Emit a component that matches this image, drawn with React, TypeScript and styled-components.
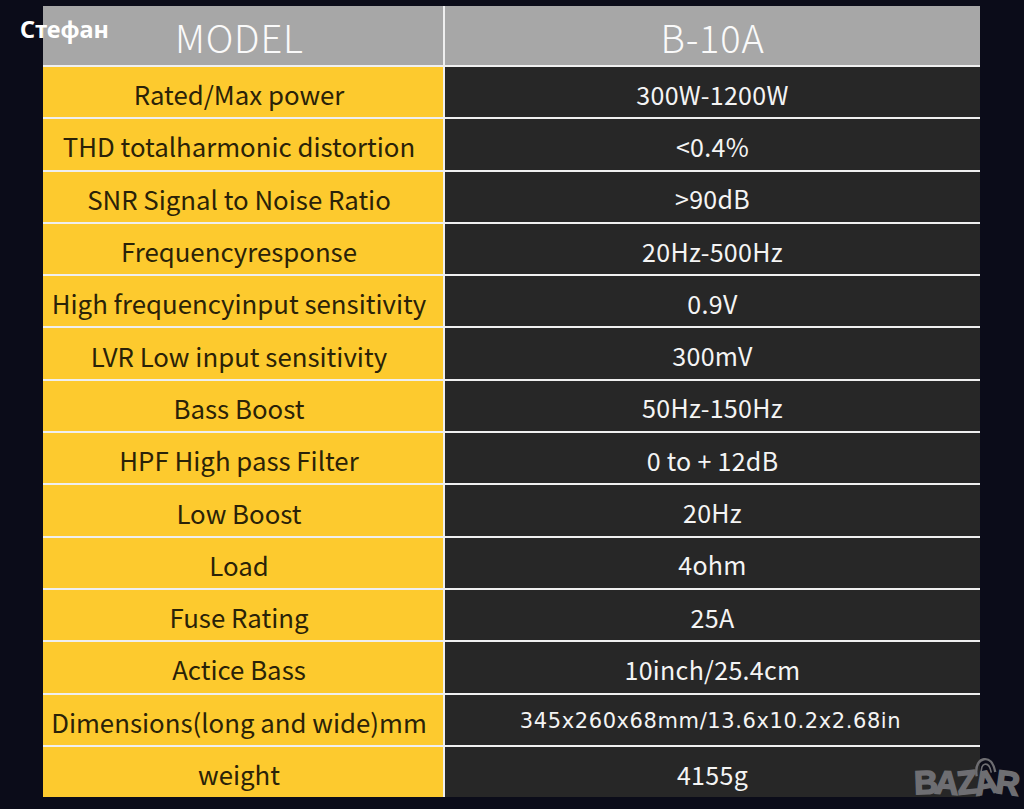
import React from "react";
import styled, { createGlobalStyle } from "styled-components";

const Global = createGlobalStyle`
  html, body { margin: 0; padding: 0; background: #0b0c19; }
  body { width: 1024px; height: 809px; overflow: hidden; }
`;

const Page = styled.div`
  position: relative;
  width: 1024px;
  height: 809px;
  background: #0b0c19;
  padding: 6px 44px 0 43px;
  box-sizing: border-box;
`;

const Table = styled.div`
  display: grid;
  grid-template-columns: 400px 2px 535px;
  width: 937px;
  background: #efefef;
`;

const HeadCell = styled.div`
  height: 59px;
  background: #a7a7a7;
  color: #fafafa;
  font-family: "Noto Sans CJK SC", "Noto Sans", sans-serif;
  font-weight: 300;
  font-size: 38px;
  letter-spacing: 0.8px;
  display: flex;
  align-items: center;
  justify-content: center;
  padding-top: 2px;
  box-sizing: border-box;
`;

const HeadLabel = styled(HeadCell)`
  justify-content: flex-start;
  padding-left: 132px;
`;

const Divider = styled.div`
  background: #efefef;
`;

const Cell = styled.div<{ $h: number }>`
  height: ${(p) => p.$h}px;
  margin-top: 2px;
  display: flex;
  align-items: center;
  justify-content: center;
  padding-top: 3px;
  box-sizing: border-box;
  font-family: "Noto Sans CJK SC", "Noto Sans", sans-serif;
  white-space: nowrap;
`;

const Label = styled(Cell)`
  background: #fdca2e;
  color: #2a2208;
  font-size: 25.8px;
  padding-right: 8px;
`;

const Value = styled(Cell)<{ $small?: boolean }>`
  background: #272727;
  color: #f4f4f4;
  font-family: ${(p) =>
    p.$small ? '"DejaVu Sans", sans-serif' : '"Noto Sans CJK SC", "Noto Sans", sans-serif'};
  font-size: ${(p) => (p.$small ? "21px" : "25px")};
  letter-spacing: ${(p) => (p.$small ? "0.6px" : "0.3px")};
  padding-right: ${(p) => (p.$small ? "4px" : "0")};
`;

const User = styled.div`
  position: absolute;
  left: 20px;
  top: 13px;
  color: #ffffff;
  font-family: "Noto Sans", "DejaVu Sans", sans-serif;
  font-weight: 700;
  font-size: 23.5px;
`;

const Logo = styled.div`
  position: absolute;
  left: 914px;
  top: 768px;
  display: flex;
  align-items: flex-end;
  color: #6e6e72;
  font-family: "Liberation Sans", "DejaVu Sans", sans-serif;
  font-weight: 700;
  font-size: 33px;
  line-height: 30px;
  letter-spacing: -2.5px;
  -webkit-text-stroke: 1.6px #6e6e72;
`;

const LogoLetter = styled.span<{ $rot?: number }>`
  position: relative;
  display: inline-block;
  transform: rotate(${(p) => p.$rot ?? 0}deg);
`;

const Handle = styled.svg`
  position: absolute;
  left: 1px;
  top: -10px;
  width: 24px;
  height: 18px;
`;

const rows: [string, string, boolean?][] = [
  ["Rated/Max power", "300W-1200W"],
  ["THD totalharmonic distortion", "<0.4%"],
  ["SNR Signal to Noise Ratio", ">90dB"],
  ["Frequencyresponse", "20Hz-500Hz"],
  ["High frequencyinput sensitivity", "0.9V"],
  ["LVR Low input sensitivity", "300mV"],
  ["Bass Boost", "50Hz-150Hz"],
  ["HPF High pass Filter", "0 to + 12dB"],
  ["Low Boost", "20Hz"],
  ["Load", "4ohm"],
  ["Fuse Rating", "25A"],
  ["Actice Bass", "10inch/25.4cm"],
  ["Dimensions(long and wide)mm", "345x260x68mm/13.6x10.2x2.68in", true],
  ["weight", "4155g"],
];

export default function App() {
  const h = 50.3;
  return (
    <>
      <Global />
      <Page>
        <Table>
          <HeadLabel>MODEL</HeadLabel>
          <Divider />
          <HeadCell>B-10A</HeadCell>
          {rows.map(([l, v, s], i) => (
            <React.Fragment key={i}>
              <Label $h={h}>{l}</Label>
              <Divider />
              <Value $h={h} $small={s}>{v}</Value>
            </React.Fragment>
          ))}
        </Table>
        <User>Стефан</User>
        <Logo>
          <LogoLetter $rot={-2}>B</LogoLetter>
          <LogoLetter $rot={4}>A</LogoLetter>
          <LogoLetter $rot={-6}>Z</LogoLetter>
          <LogoLetter $rot={-10}>
            <Handle viewBox="0 0 24 18">
              <path d="M3 17 C3 5 9 1.5 13 1.5 C18 1.5 22 6 22 16" fill="none" stroke="#6e6e72" strokeWidth="2.4" />
              <path d="M8 17 C8 9 11 6.5 13 6.5 C16 6.5 18 9.5 18 16" fill="none" stroke="#6e6e72" strokeWidth="1.6" />
            </Handle>
            A
          </LogoLetter>
          <LogoLetter $rot={8}>R</LogoLetter>
        </Logo>
      </Page>
    </>
  );
}
